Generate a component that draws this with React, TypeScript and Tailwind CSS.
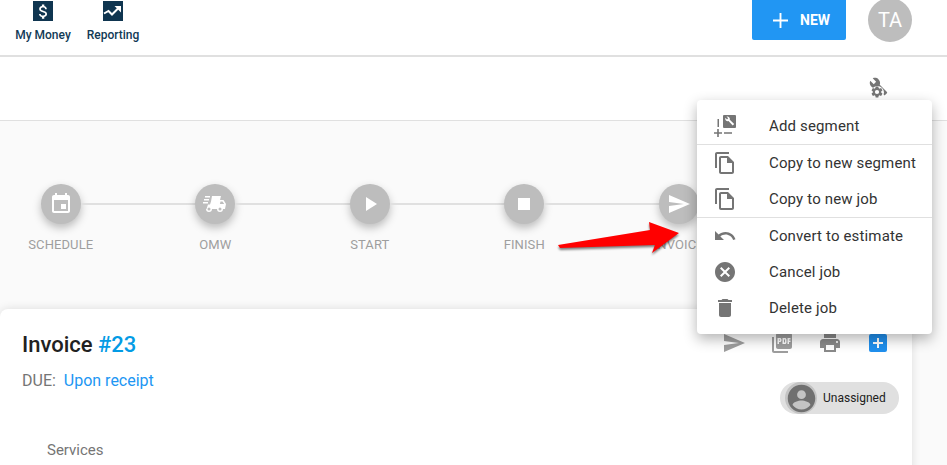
import React from "react";

const ICONS = {
  event: "M17 12h-5v5h5v-5zM16 1v2H8V1H6v2H5c-1.11 0-1.99.9-1.99 2L3 19c0 1.1.89 2 2 2h14c1.1 0 2-.9 2-2V5c0-1.1-.9-2-2-2h-1V1h-2zm3 18H5V8h14v11z",
  play: "M8 5v14l11-7z",
  stop: "M6 6h12v12H6z",
  send: "M2.01 21L23 12 2.01 3 2 10l15 2-15 2z",
  copy: "M16 1H4c-1.1 0-2 .9-2 2v14h2V3h12V1zm-1 4H8c-1.1 0-1.99.9-1.99 2L6 21c0 1.1.89 2 1.99 2H19c1.1 0 2-.9 2-2V11l-6-6zM8 21V7h6v5h5v9H8z",
  undo: "M12.5 8c-2.65 0-5.05.99-6.9 2.6L2 7v9h9l-3.62-3.62c1.39-1.16 3.16-1.88 5.12-1.88 3.54 0 6.55 2.31 7.6 5.5l2.37-.78C21.08 11.03 17.15 8 12.5 8z",
  cancel: "M12 2C6.47 2 2 6.47 2 12s4.47 10 10 10 10-4.47 10-10S17.53 2 12 2zm5 13.59L15.59 17 12 13.41 8.41 17 7 15.59 10.59 12 7 8.41 8.41 7 12 10.59 15.59 7 17 8.41 13.41 12 17 15.59z",
  trash: "M6 19c0 1.1.9 2 2 2h8c1.1 0 2-.9 2-2V7H6v12zM19 4h-3.5l-1-1h-5l-1 1H5v2h14V4z",
  print: "M19 8H5c-1.66 0-3 1.34-3 3v6h4v4h12v-4h4v-6c0-1.66-1.34-3-3-3zm-3 11H8v-5h8v5zm3-7c-.55 0-1-.45-1-1s.45-1 1-1 1 .45 1 1-.45 1-1 1zm-1-9H6v4h12V3z",
  pdf: "M20 2H8c-1.1 0-2 .9-2 2v12c0 1.1.9 2 2 2h12c1.1 0 2-.9 2-2V4c0-1.1-.9-2-2-2zm-8.5 7.5c0 .83-.67 1.5-1.5 1.5H9v2H7.5V7H10c.83 0 1.5.67 1.5 1.5v1zm5 2c0 .83-.67 1.5-1.5 1.5h-2.5V7H15c.83 0 1.5.67 1.5 1.5v3zm4-3H19v1h1.5V11H19v2h-1.5V7h3v1.5zM9 9.5h1v-1H9v1zM4 6H2v14c0 1.1.9 2 2 2h14v-2H4V6zm10 5.5h1v-3h-1v3z",
  wrench: "M22.7 19l-9.1-9.1c.9-2.3.4-5-1.5-6.9-2-2-5-2.4-7.4-1.3L9 6 6 9 1.6 4.7C.4 7.1.9 10.1 2.9 12.1c1.9 1.9 4.6 2.4 6.9 1.5l9.1 9.1c.4.4 1 .4 1.4 0l2.3-2.3c.5-.4.5-1.1.1-1.4z",
  gear: "M19.14 12.94c.04-.3.06-.61.06-.94s-.02-.64-.07-.94l2.03-1.58a.49.49 0 0 0 .12-.61l-1.92-3.32a.49.49 0 0 0-.59-.22l-2.39.96c-.5-.38-1.03-.7-1.62-.94l-.36-2.54a.48.48 0 0 0-.48-.41h-3.84c-.24 0-.43.17-.47.41l-.36 2.54c-.59.24-1.13.57-1.62.94l-2.39-.96a.48.48 0 0 0-.59.22L2.74 8.87c-.12.21-.08.47.12.61l2.03 1.58c-.05.3-.09.63-.09.94s.02.64.07.94l-2.03 1.58a.49.49 0 0 0-.12.61l1.92 3.32c.12.22.37.29.59.22l2.39-.96c.5.38 1.03.7 1.62.94l.36 2.54c.05.24.24.41.48.41h3.84c.24 0 .44-.17.47-.41l.36-2.54c.59-.24 1.13-.56 1.62-.94l2.39.96c.22.08.47 0 .59-.22l1.92-3.32c.12-.22.07-.47-.12-.61l-2.01-1.58zM12 15.6A3.6 3.6 0 1 1 12 8.4a3.6 3.6 0 0 1 0 7.2z",
  truck: "M2 4h5v1.5H2zM1 7h5v1.5H1zM0 10h5v1.5H0zM9 4h9l-1 4h3.5l2.5 4-1 5h-2a3 3 0 0 1-6 0H9a3 3 0 0 1-6 0H3.5L5 12.5h2L8 9.5zM6 15.5a1.5 1.5 0 1 0 0 3 1.5 1.5 0 0 0 0-3zM17 15.5a1.5 1.5 0 1 0 0 3 1.5 1.5 0 0 0 0-3zM17.5 9.5l-.6 2.5h4.3l-1.7-2.5z",
  money: "M11.8 10.9c-2.27-.59-3-1.2-3-2.15 0-1.09 1.01-1.85 2.7-1.85 1.78 0 2.44.85 2.5 2.1h2.21c-.07-1.72-1.12-3.3-3.21-3.81V3h-3v2.16c-1.94.42-3.5 1.68-3.5 3.61 0 2.31 1.91 3.46 4.7 4.13 2.5.6 3 1.48 3 2.41 0 .69-.49 1.79-2.7 1.79-2.06 0-2.87-.92-2.98-2.1h-2.2c.12 2.19 1.76 3.42 3.68 3.83V21h3v-2.15c1.95-.37 3.5-1.5 3.5-3.55 0-2.84-2.43-3.81-4.7-4.4z",
  person: "M12 2C6.48 2 2 6.48 2 12s4.48 10 10 10 10-4.48 10-10S17.52 2 12 2zm0 4a3.2 3.2 0 1 1 0 6.4A3.2 3.2 0 0 1 12 6zm0 14c-2.7 0-5.1-1.3-6.5-3.3.1-2.1 4.3-3.3 6.5-3.3s6.4 1.2 6.5 3.3C17.1 18.7 14.7 20 12 20z",
};

const Icon = ({ d, className }: { d: string; className?: string }) => (
  <svg viewBox="0 0 24 24" fill="currentColor" fillRule="evenodd" className={className}>
    <path d={d} />
  </svg>
);

const steps = [
  { label: "SCHEDULE", icon: ICONS.event },
  { label: "OMW", icon: ICONS.truck },
  { label: "START", icon: ICONS.play },
  { label: "FINISH", icon: ICONS.stop },
  { label: "INVOICE", icon: ICONS.send },
];

const menuGroups = [
  [{ label: "Add segment", icon: "add" }],
  [
    { label: "Copy to new segment", icon: ICONS.copy },
    { label: "Copy to new job", icon: ICONS.copy },
  ],
  [
    { label: "Convert to estimate", icon: ICONS.undo },
    { label: "Cancel job", icon: ICONS.cancel },
    { label: "Delete job", icon: ICONS.trash },
  ],
];

const AddSegmentIcon = () => (
  <svg viewBox="0 0 24 24" fill="currentColor" className="h-6 w-6">
    <rect x="10" y="1" width="13" height="13" rx="1" />
    <path
      d="M12.3 3.8a2.6 2.6 0 0 0 3.2 3.3l4.2 4.4 1.5-1.5-4.4-4.2a2.6 2.6 0 0 0-3.3-3.2l1.7 1.7-1.2 1.2z"
      fill="#fff"
    />
    <path d="M4.5 5H6v8H4.5zM4.2 15h1.6v3.2H9v1.6H5.8V23H4.2v-3.2H1v-1.6h3.2zM11 18.2h8v1.6h-8z" />
  </svg>
);

export default function App() {
  return (
    <div
      className="relative h-[465px] w-[947px] overflow-hidden bg-white"
      style={{ fontFamily: "Roboto, sans-serif" }}
    >
      {/* Top bar */}
      <header className="flex h-[57px] items-start border-b-2 border-[#e0e0e0] bg-white">
        <nav className="flex">
          <div className="ml-[15px] flex w-[56px] flex-col items-center">
            <div className="mt-px flex h-5 w-5 items-center justify-center bg-[#0f3550] text-white">
              <Icon d={ICONS.money} className="h-[19px] w-[19px]" />
            </div>
            <span className="mt-[6px] text-xs font-medium leading-[16px] text-[#123a56]">My Money</span>
          </div>
          <div className="ml-4 flex w-[52px] flex-col items-center">
            <div className="mt-px flex h-5 w-5 items-center justify-center bg-[#0f3550] text-white">
              <svg viewBox="0 0 20 20" className="h-5 w-5">
                <path d="M1 12.5l4.5-2.5 3.5 3.5 6-6" fill="none" stroke="currentColor" strokeWidth="2" />
                <path d="M11.5 5H18v6.5z" fill="currentColor" />
              </svg>
            </div>
            <span className="mt-[6px] text-xs font-medium leading-[16px] text-[#123a56]">Reporting</span>
          </div>
        </nav>
        <button className="ml-auto flex h-10 w-[94px] items-center gap-[12px] rounded-b-[2px] bg-[#2196f3] pl-[21px] text-white">
          <svg viewBox="0 0 16 16" fill="currentColor" className="h-[15px] w-[15px]">
            <path d="M7 0h2v7h7v2H9v7H7V9H0V7h7z" />
          </svg>
          <span className="text-sm font-bold leading-none">NEW</span>
        </button>
        <div className="ml-[22px] mr-[35px] -mt-[2px] flex h-11 w-11 items-center justify-center rounded-full bg-[#bdbdbd] text-xl text-white">
          TA
        </div>
      </header>

      {/* Toolbar */}
      <div className="flex h-[64px] items-start justify-end border-b border-[#e0e0e0] bg-white pr-[58px] pt-[20px]">
        <div className="relative h-5 w-5 text-[#757575]">
          <Icon d={ICONS.wrench} className="h-[19px] w-[19px]" />
          <div className="absolute left-[1.5px] top-[8.5px] h-[13px] w-[13px] rounded-full bg-white" />
          <Icon d={ICONS.gear} className="absolute left-[1px] top-[8px] h-[14px] w-[14px]" />
        </div>
      </div>

      <main className="h-[344px] bg-[#fafafa]">
        {/* Stepper */}
        <div className="-ml-[16.5px] flex pt-[63px]">
          {steps.map((step, i) => (
            <div key={step.label} className="flex w-[154.5px] flex-col items-center">
              <div className="flex w-full items-center">
                <div className={`h-0.5 flex-1 ${i === 0 ? "" : "bg-[#e0e0e0]"}`} />
                <div className="flex h-10 w-10 items-center justify-center rounded-full bg-[#bdbdbd] text-white shadow-[0_4px_8px_rgba(0,0,0,0.25)]">
                  <Icon d={step.icon} className="h-6 w-6" />
                </div>
                <div className="h-0.5 flex-1 bg-[#e0e0e0]" />
              </div>
              <span className="mt-[14px] text-[13px] leading-[14px] tracking-[0.1px] text-[#9e9e9e]">{step.label}</span>
            </div>
          ))}
        </div>

        {/* Invoice card */}
        <section className="mt-[57px] h-[200px] w-[912px] rounded-lg bg-white pl-[22px] pr-[13px] pt-[21px] shadow-[0_0_10px_rgba(0,0,0,0.12)]">
          <div className="flex items-start justify-between">
            <div>
              <h2 className="text-[22px] font-medium leading-[30px] text-[#212121]">
                Invoice <span className="text-[#039be5]">#23</span>
              </h2>
              <p className="mt-[11px] text-base leading-[20px] text-[#757575]">
                DUE: <span className="ml-1 text-[#2196f3]">Upon receipt</span>
              </p>
            </div>
            <div className="flex flex-col items-end">
              <div className="mr-[12px] mt-[1px] flex gap-6 text-[#9e9e9e]">
                <Icon d={ICONS.send} className="h-6 w-6" />
                <Icon d={ICONS.pdf} className="h-6 w-6" />
                <Icon d={ICONS.print} className="h-6 w-6 text-[#8a8a8a]" />
                <svg viewBox="0 0 18 18" className="ml-[3px] mt-[3px] h-[18px] w-[18px]">
                  <rect width="18" height="18" rx="2" fill="#2090ee" />
                  <path d="M8 4h2v4h4v2h-4v4H8v-4H4V8h4z" fill="#fff" />
                </svg>
              </div>
              <div className="mt-[27px] flex h-8 w-[119px] items-center rounded-full bg-[#e0e0e0] pl-[5px]">
                <div className="flex h-8 w-8 items-center justify-center rounded-full bg-[#c4c4c4] text-[#707070]">
                  <Icon d={ICONS.person} className="h-[33px] w-[33px] shrink-0" />
                </div>
                <span className="ml-[6px] text-xs text-[#212121]">Unassigned</span>
              </div>
            </div>
          </div>
          <p className="mt-[26px] pl-[25px] text-[15px] leading-[20px] text-[#757575]">Services</p>
        </section>
      </main>

      {/* Actions menu */}
      <div className="absolute left-[697px] top-[100px] w-[235px] rounded-[4px] bg-white py-2 shadow-[0_5px_14px_rgba(0,0,0,0.3)]">
        {menuGroups.map((group, g) => (
          <div key={g} className={g > 0 ? "border-t border-[#e0e0e0]" : ""}>
            {group.map((item) => (
              <div key={item.label} className="flex h-9 items-center pl-4 text-[#757575]">
                {item.icon === "add" ? <AddSegmentIcon /> : <Icon d={item.icon} className="h-6 w-6" />}
                <span className="ml-8 text-[15px] tracking-[0.15px] text-[#333333]">{item.label}</span>
              </div>
            ))}
          </div>
        ))}
      </div>

      {/* Red annotation arrow */}
      <svg className="absolute left-[550px] top-[215px] h-[50px] w-[140px]" viewBox="0 0 140 50">
        <polygon
          points="8,30 100,15 99,7 129,18 102,38 105,30 10,33"
          fill="#ff0000"
          style={{ filter: "drop-shadow(0 2px 1px rgba(0,0,0,0.5))" }}
        />
      </svg>
    </div>
  );
}
